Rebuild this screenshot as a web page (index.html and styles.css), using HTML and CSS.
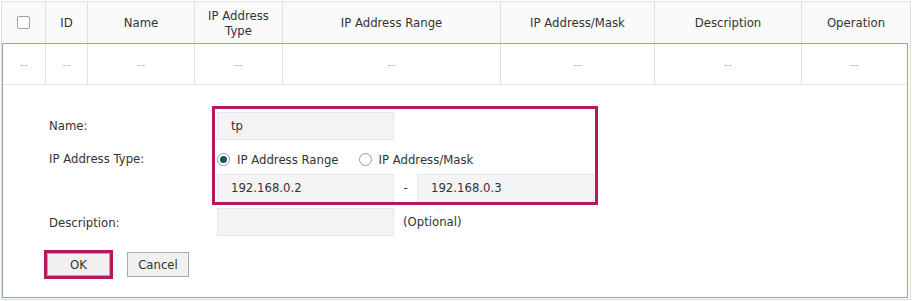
FILE: index.html
```html
<!DOCTYPE html>
<html lang="en">
<head>
  <meta charset="UTF-8">
  <title>IP Group</title>
  <link rel="stylesheet" href="styles.css">
</head>
<body>
  <div class="grid">
    <div class="row head">
      <div class="cell c-chk"><span class="checkbox"></span></div>
      <div class="cell c-id">ID</div>
      <div class="cell c-name">Name</div>
      <div class="cell c-type">IP Address<br>Type</div>
      <div class="cell c-range">IP Address Range</div>
      <div class="cell c-mask">IP Address/Mask</div>
      <div class="cell c-desc">Description</div>
      <div class="cell c-op">Operation</div>
    </div>

    <div class="edit">
      <div class="row data">
        <div class="cell c-chk">--</div>
        <div class="cell c-id">--</div>
        <div class="cell c-name">--</div>
        <div class="cell c-type">--</div>
        <div class="cell c-range">--</div>
        <div class="cell c-mask">--</div>
        <div class="cell c-desc">--</div>
        <div class="cell c-op">--</div>
      </div>

      <div class="form">
        <div class="fields">
          <div class="labels">
            <div class="lbl">Name:</div>
            <div class="lbl lbl-type">IP Address Type:</div>
            <div class="lbl"></div>
          </div>
          <div class="mark">
            <div class="line">
              <div class="input">tp</div>
            </div>
            <div class="line radios">
              <span class="radio on"></span><span class="radio-text">IP Address Range</span>
              <span class="radio"></span><span class="radio-text">IP Address/Mask</span>
            </div>
            <div class="line">
              <div class="input">192.168.0.2</div>
              <span class="dash">-</span>
              <div class="input">192.168.0.3</div>
            </div>
          </div>
        </div>

        <div class="desc-row">
          <div class="lbl">Description:</div>
          <div class="input"></div>
          <span class="hint">(Optional)</span>
        </div>

        <div class="buttons">
          <button class="btn btn-ok">OK</button>
          <button class="btn">Cancel</button>
        </div>
      </div>
    </div>
  </div>
</body>
</html>
```

FILE: styles.css
```css
* {
  box-sizing: border-box;
}
body {
  margin: 0;
  padding: 1px 0 0 1px;
  font-family: "DejaVu Sans", Verdana, sans-serif;
  font-size: 11.7px;
  color: #333;
  background: #fff;
}
.grid {
  width: 910px;
  border: 1px solid #ddd;
  border-top-color: #e2e2e2;
}
.row {
  display: flex;
}
.cell {
  display: flex;
  align-items: center;
  justify-content: center;
  text-align: center;
  border-right: 1px solid #e0e0e0;
  line-height: 15px;
}
.head {
  height: 41px;
  background: #fafafa;
}
.head .cell {
  padding-top: 2px;
}
.c-chk { width: 44px; }
.c-id { width: 42px; }
.c-name { width: 107px; }
.c-type { width: 88px; }
.c-range { width: 218px; }
.c-mask { width: 154px; }
.c-desc { width: 147px; }
.c-op { flex: 1; border-right: none; }

.head .c-chk {
  padding-top: 0;
}
.checkbox {
  width: 13px;
  height: 13px;
  border: 1px solid #a0a0a0;
  border-radius: 2px;
  background: #fff;
}

/* row being edited */
.edit {
  width: 906px;
  border: 1px solid #8ea7c1;
  margin-bottom: 1px;
}
.data {
  height: 41px;
  border-bottom: 1px solid #e6e6e6;
  color: #c0c0c0;
}
.data .cell {
  padding-top: 2px;
}
.data .c-chk { width: 43px; }

.form {
  padding: 21px 0 20px 46px;
}
.fields {
  display: flex;
}
.labels {
  width: 163px;
  padding-top: 6px;
}
.lbl {
  height: 28px;
  line-height: 28px;
}
.labels .lbl-type {
  height: 34px;
  line-height: 34px;
  padding-top: 2px;
}
.mark {
  width: 386px;
  border: 3px solid #b5195c;
  padding: 3px 0 0 2px;
}
.line {
  display: flex;
  align-items: center;
  height: 28px;
}
.line.radios {
  height: 34px;
  padding-top: 5px;
}
.input {
  width: 177px;
  height: 28px;
  line-height: 27px;
  padding: 0 13px;
  background: #f4f4f4;
  border: 1px solid #e8e8e8;
}
.dash {
  width: 23px;
  text-align: center;
}
.radio {
  width: 13px;
  height: 13px;
  border: 1px solid #9a9a9a;
  border-radius: 50%;
  background: #fff;
  display: flex;
  align-items: center;
  justify-content: center;
}
.radio.on::after {
  content: "";
  width: 7px;
  height: 7px;
  border-radius: 50%;
  background: #0f5a68;
}
.radio-text {
  margin: 0 20px 0 7px;
}

.desc-row {
  display: flex;
  align-items: center;
  margin-top: 3px;
}
.desc-row .lbl {
  width: 168px;
  line-height: 30px;
}
.hint {
  margin-left: 9px;
}

.buttons {
  display: flex;
  align-items: center;
  gap: 17px;
  margin: 16px 0 0 -2px;
}
.btn {
  font-family: inherit;
  font-size: 11.7px;
  color: #333;
  background: #f0f0f0;
  border: 1px solid #aaa;
  height: 25px;
  width: 62px;
  padding: 0;
}
.btn-ok {
  width: 63px;
  height: 23px;
  outline: 3px solid #b5195c;
}
```
